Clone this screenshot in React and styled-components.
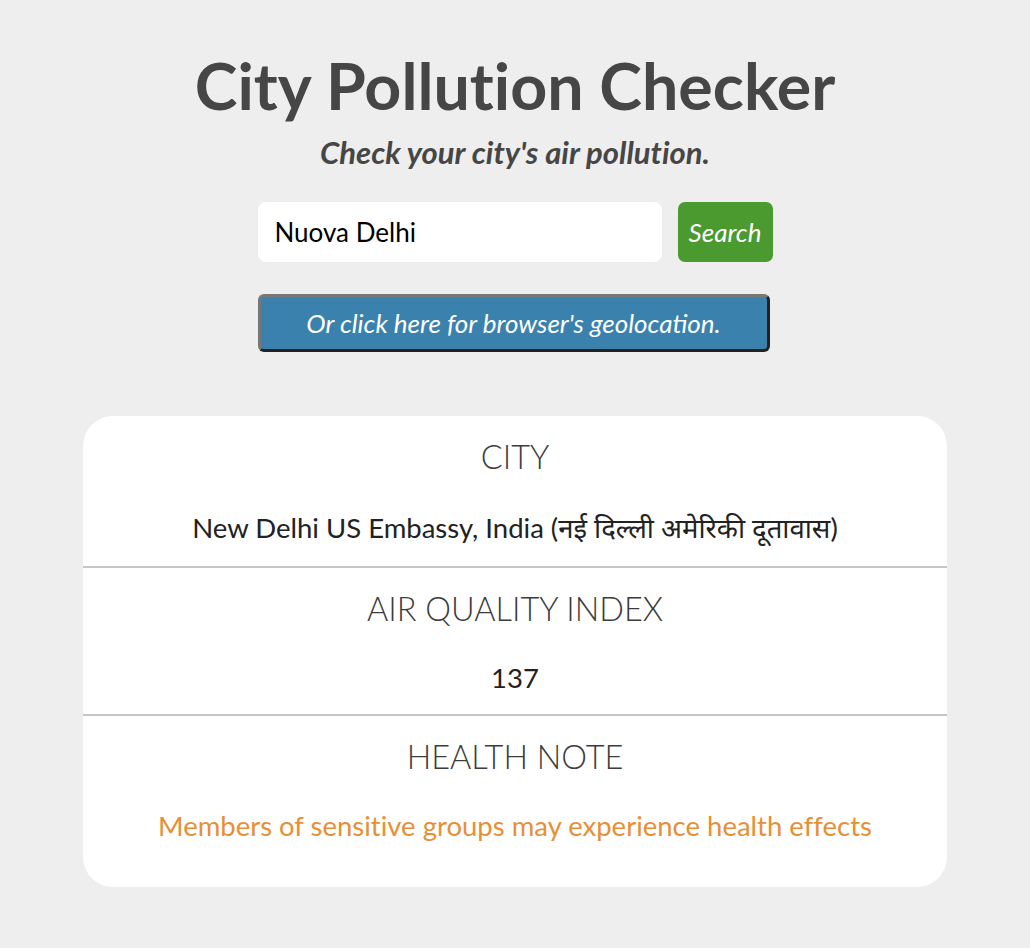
import React, { useState } from "react";
import styled, { createGlobalStyle } from "styled-components";

const GlobalStyle = createGlobalStyle`
  body {
    margin: 0;
    background: #eeeeee;
    font-family: Lato, "Noto Sans", sans-serif;
    font-variant-ligatures: no-common-ligatures;
    color: #444444;
  }
`;

const Page = styled.main`
  display: flex;
  flex-direction: column;
  align-items: center;
  padding: 40px 0 60px;
`;

const Title = styled.h1`
  margin: 0;
  font-size: 64.5px;
  font-weight: 700;
  line-height: 90px;
  color: #464646;
`;

const Subtitle = styled.p`
  margin: 0;
  font-size: 31px;
  font-weight: 700;
  font-style: italic;
  line-height: 44px;
  color: #464646;
`;

const SearchRow = styled.form`
  display: flex;
  gap: 16px;
  margin-top: 28px;
`;

const CityInput = styled.input`
  width: 404px;
  height: 60px;
  box-sizing: border-box;
  border: none;
  border-radius: 8px;
  padding: 0 17px;
  font-family: Lato, sans-serif;
  font-size: 26px;
  color: #000;
  background: #fff;
  outline: none;
`;

const SearchButton = styled.button`
  width: 95px;
  height: 60px;
  padding: 0;
  border: none;
  border-radius: 7px;
  background: #4a9a30;
  color: #fff;
  font-family: Lato, sans-serif;
  font-style: italic;
  font-size: 26px;
  cursor: pointer;
`;

const GeoButton = styled.button`
  margin-top: 32px;
  margin-right: 3px;
  width: 512px;
  height: 58px;
  padding: 0;
  box-sizing: border-box;
  border: 3px solid;
  border-color: #777777 #222222 #222222 #777777;
  border-radius: 6px;
  background: #3a82ad;
  color: #fff;
  font-family: Lato, sans-serif;
  font-style: italic;
  font-size: 26px;
  cursor: pointer;
`;

const ResultCard = styled.section`
  margin-top: 64px;
  width: 864px;
  background: #fff;
  border-radius: 30px;
  overflow: hidden;
`;

const ResultRow = styled.div`
  display: flex;
  flex-direction: column;
  align-items: center;
  padding: ${(p) => (p.$last ? "19px 0 45px" : "19px 0 20px")};
  border-bottom: ${(p) => (p.$last ? "none" : "2px solid #c6c6c6")};
`;

const Label = styled.h2`
  margin: 0;
  font-size: 32.5px;
  font-weight: 300;
  line-height: 44px;
  color: #3c3c3c;
`;

const Value = styled.p`
  margin: 30px 0 0;
  font-size: 27.5px;
  font-weight: 400;
  line-height: normal;
  color: ${(p) => p.$color || "#222222"};
`;

const results = [
  { label: "CITY", value: "New Delhi US Embassy, India (नई दिल्ली अमेरिकी दूतावास)" },
  { label: "AIR QUALITY INDEX", value: "137" },
  {
    label: "HEALTH NOTE",
    value: "Members of sensitive groups may experience health effects",
    color: "#e88f36",
  },
];

const App = () => {
  const [city, setCity] = useState("Nuova Delhi");

  return (
    <>
      <GlobalStyle />
      <Page>
        <Title>City Pollution Checker</Title>
        <Subtitle>Check your city's air pollution.</Subtitle>

        <SearchRow onSubmit={(e) => e.preventDefault()}>
          <CityInput value={city} onChange={(e) => setCity(e.target.value)} />
          <SearchButton type="submit">Search</SearchButton>
        </SearchRow>

        <GeoButton type="button">Or click here for browser's geolocation.</GeoButton>

        <ResultCard>
          {results.map((r, i) => (
            <ResultRow key={r.label} $last={i === results.length - 1}>
              <Label>{r.label}</Label>
              <Value $color={r.color}>{r.value}</Value>
            </ResultRow>
          ))}
        </ResultCard>
      </Page>
    </>
  );
};

export default App;
